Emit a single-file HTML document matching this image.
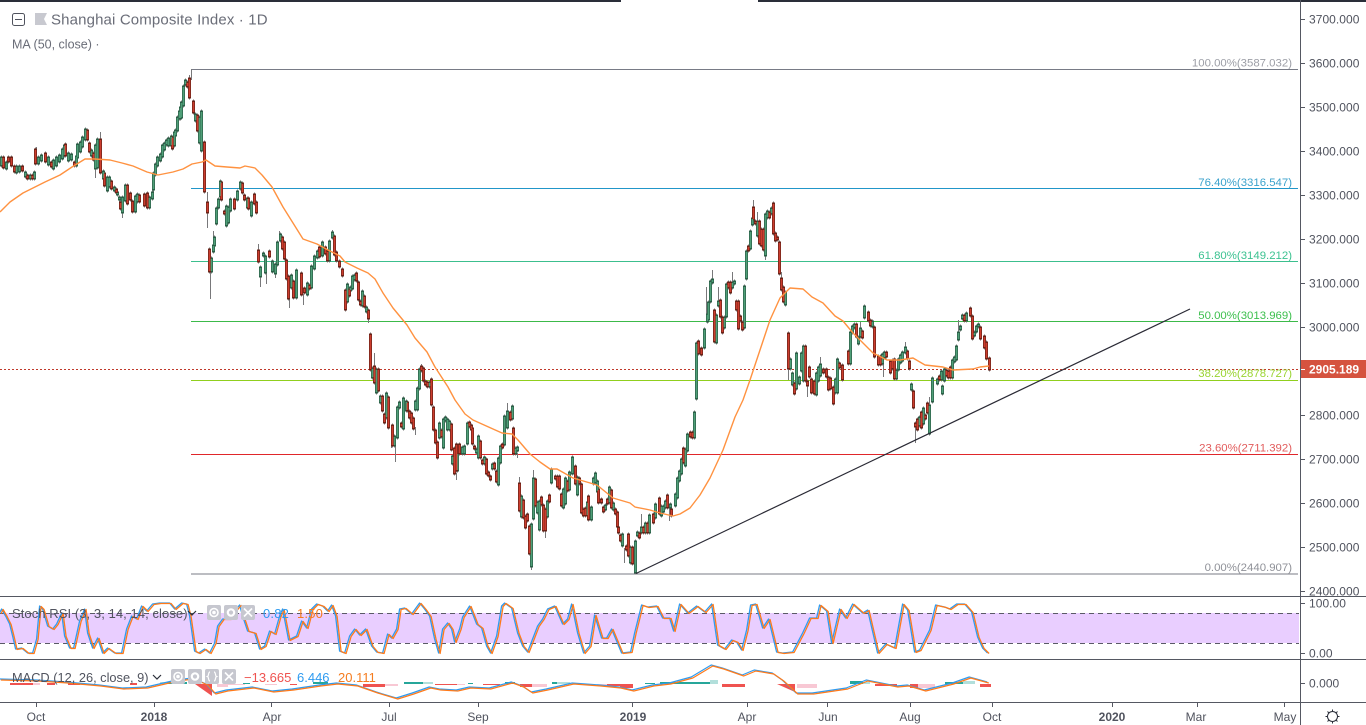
<!DOCTYPE html>
<html><head><meta charset="utf-8"><title>Shanghai Composite Index</title>
<style>
html,body{margin:0;padding:0;background:#fff;width:1366px;height:725px;overflow:hidden}
svg{position:absolute;left:0;top:0;display:block}
text{font-family:"Liberation Sans",sans-serif;font-size:12px;fill:#50535e}
.f{font-size:11.4px;text-anchor:end}
.a{font-size:12px;letter-spacing:.05px}
.t{text-anchor:middle;font-size:12px}
</style></head><body>
<svg width="1366" height="725" viewBox="0 0 1366 725" xmlns="http://www.w3.org/2000/svg">
<defs>
<path id="g" d="M1 158V165M6 163V168M16 167V172M19 167V171M25 173V176M30 176V178M34 173V178M38 158V163M41 156V160M48 158V164M53 161V168M56 158V165M59 156V161M62 150V158M64 146V155M68 154V160M71 155V159M76 157V165M77 145V157M80 143V151M82 138V146M85 130V139M91 151V155M95 146V168M97 140V167M103 172V178M107 178V190M109 178V186M114 188V190M117 193V194M119 198V199M122 198V212M125 186V200M135 197V211M137 195V201M149 198V207M152 193V198M153 174V189M155 165V174M157 158V165M160 155V160M162 146V156M164 144V149M166 141V144M168 139V145M171 137V145M174 133V145M175 131V135M177 118V130M179 112V118M180 108V118M181 103V117M183 87V105M185 81V84M195 115V120M199 118V142M201 112V150M211 259V271M213 246V251M214 238V245M216 209V223M218 200V207M220 182V196M226 207V225M228 208V222M230 200V210M237 192V199M240 183V188M247 199V207M251 203V215M260 268V276M263 254V255M265 257V272M272 262V271M275 265V273M277 243V264M280 235V240M291 276V287M296 271V297M307 284V294M311 267V287M314 257V268M317 252V257M322 243V255M329 242V260M332 233V237M347 285V301M350 288V290M352 277V288M354 276V279M362 292V305M366 308V311M372 369V377M376 370V392M380 397V402M386 394V417M394 437V445M397 408V437M399 403V407M403 399V428M406 402V410M415 402V409M417 389V409M419 370V388M429 383V386M439 424V437M443 420V447M445 418V420M447 420V429M449 422V429M452 457V463M457 454V470M462 448V453M464 447V453M467 424V443M476 450V452M478 437V457M484 458V463M492 465V468M498 459V484M500 447V462M504 417V444M507 412V427M512 407V418M515 449V453M517 448V450M521 497V516M531 525V566M533 479V518M537 503V512M539 502V529M547 502V516M551 470V482M563 490V507M565 479V503M569 473V489M572 458V473M577 478V494M587 503V515M591 508V519M593 479V483M595 474V482M597 482V491M605 506V509M609 488V502M613 504V509M622 535V545M630 548V562M635 542V572M637 533V535M641 528V532M645 524V532M649 516V532M655 505V517M661 507V515M663 507V511M665 502V507M670 505V507M675 495V505M677 479V497M679 472V480M681 460V473M685 450V465M687 435V450M694 413V437M696 344V398M704 330V347M707 315V321M708 303V319M710 282V301M712 280V282M716 316V342M718 302V305M724 318V327M726 285V316M732 283V287M734 282V283M744 287V327M746 252V278M750 232V248M752 219V224M757 222V235M765 215V255M767 212V217M771 209V213M785 293V304M790 360V368M792 374V384M796 354V388M799 378V383M801 354V370M803 347V380M816 374V394M818 368V380M820 365V375M835 380V392M837 360V392M850 333V363M852 327V332M854 325V327M858 338V343M860 329V336M864 307V317M872 322V326M882 355V363M884 353V357M896 371V378M898 360V369M900 356V362M902 353V360M905 348V352M911 385V389M919 418V425M923 409V423M929 406V433M932 379V401M937 380V383M941 372V379M942 387V393M944 370V380M952 361V377M954 358V361M956 347V359M958 333V339M960 327V329M962 316V318M966 314V320M974 333V335M976 327V331M978 325V326"/>
<path id="r" d="M3 158V167M8 158V161M11 158V165M14 167V171M22 167V170M27 176V178M32 176V178M35 150V163M45 154V161M51 163V166M65 145V155M74 163V165M87 131V139M89 144V151M93 154V159M100 140V172M104 174V185M111 182V188M116 190V192M120 203V208M127 186V203M130 194V199M132 202V211M139 196V201M144 195V205M147 194V207M172 138V148M187 83V86M189 79V97M193 102V112M197 116V130M204 143V191M207 203V212M209 250V271M221 183V199M224 212V213M234 200V208M242 184V192M244 196V199M248 199V208M254 195V203M256 203V212M258 251V261M269 252V256M282 238V248M284 243V258M286 261V278M288 277V298M293 282V297M301 274V294M304 289V292M309 286V288M319 248V256M325 248V253M327 252V260M334 237V254M336 253V260M339 262V266M342 270V275M345 291V309M349 290V295M356 274V280M358 283V299M360 302V304M364 297V306M368 311V318M370 335V369M374 367V382M378 370V390M382 397V410M384 415V422M388 398V427M392 426V445M401 424V426M407 403V410M409 412V417M411 414V422M413 419V428M421 367V370M423 369V380M425 382V384M427 383V386M431 380V404M433 408V429M435 431V442M437 443V457M441 431V436M451 425V449M454 449V473M456 445V470M459 445V453M469 423V426M471 426V429M472 429V443M474 447V448M480 442V457M482 461V463M486 460V473M488 473V475M490 477V479M494 464V468M496 472V481M502 445V447M510 413V419M513 429V453M519 484V510M523 501V517M525 517V527M527 515V520M529 527V553M535 480V505M541 498V504M543 506V530M545 510V530M549 496V501M555 477V478M557 477V486M559 477V488M561 495V505M567 482V490M575 467V483M579 479V483M581 485V512M583 510V515M585 509V515M588 497V519M598 490V502M601 500V502M603 508V511M607 500V503M611 491V507M615 510V513M617 513V526M618 528V532M620 536V540M626 547V549M628 535V555M632 548V563M639 534V537M643 528V532M647 524V532M653 515V522M659 499V513M667 496V507M671 510V515M683 449V462M690 433V436M692 433V437M698 342V353M701 349V354M714 311V341M720 301V316M722 318V332M728 283V287M730 283V292M736 302V309M738 302V328M740 317V320M742 323V329M748 247V250M753 208V219M755 222V223M759 222V243M761 230V245M763 230V249M769 213V217M773 204V233M775 234V240M777 238V239M779 243V273M781 279V289M783 288V301M788 334V368M794 384V393M805 347V380M807 382V385M809 368V376M811 380V392M814 382V393M823 370V372M826 370V376M828 378V389M830 379V388M833 388V403M839 364V367M842 366V379M848 352V363M856 325V336M862 332V337M868 313V320M870 321V325M874 328V356M878 357V364M880 357V364M886 353V356M890 362V372M892 361V368M894 360V378M907 352V358M909 362V368M913 392V407M915 424V426M917 420V429M921 413V427M925 416V418M927 404V412M939 377V379M946 371V375M948 372V377M950 368V377M964 316V320M970 309V315M972 317V338M980 328V338M984 337V347M986 343V358M989 359V369"/>
<path id="st" d="M0 613L2 609L6 616L10 624L13 636L16 649L22 648L28 653L33 653L37 639L40 606L43 609L48 626L53 629L57 624L62 613L65 636L70 648L74 648L80 621L85 609L88 633L93 648L98 638L103 653L108 648L115 653L122 653L127 629L132 616L137 619L142 606L147 611L153 604L160 603L170 603L175 609L182 603L187 604L190 616L195 651L199 653L205 649L210 653L215 643L218 626L223 619L230 619L235 611L240 605L243 616L248 631L255 633L260 649L265 646L270 631L275 634L280 616L283 609L289 640L297 636L302 621L307 628L312 609L317 604L323 606L328 611L332 605L336 616L340 651L345 653L350 636L355 629L360 635L366 629L372 646L377 652L383 653L388 634L392 638L397 629L400 609L405 608L412 614L420 603L425 609L430 616L435 639L439 653L443 629L448 623L452 629L455 642L460 629L463 617L470 606L477 624L482 628L487 646L491 653L497 636L502 606L505 603L512 608L518 633L523 646L528 652L533 639L538 626L543 619L548 609L555 606L563 624L568 619L572 604L578 633L584 653L590 646L595 615L602 638L607 638L612 629L617 641L622 653L631 652L635 633L642 605L648 607L657 606L663 618L670 618L674 631L680 604L688 613L697 606L705 612L712 604L718 645L725 649L732 640L737 642L742 650L747 630L751 605L756 604L763 628L769 619L777 652L783 653L793 652L803 633L810 618L817 618L820 605L827 611L832 643L840 609L846 618L853 604L863 613L868 610L878 653L886 644L895 648L903 604L908 610L915 652L920 650L930 630L936 605L945 607L950 609L957 604L965 604L972 612L978 637L983 648L988 653"/>
<path id="mc" d="M0 679L37 680L67 682L100 685L123 688L147 687L160 684L177 680L193 678L207 684L215 693L227 690L253 687L273 691L293 689L320 685L337 683L357 685L377 692L397 698L413 693L430 687L440 689L457 690L470 687L490 688L512 682L523 686L532 692L547 689L573 683L600 685L620 687L633 690L653 685L670 683L692 677L712 665L723 668L743 675L755 670L773 673L783 680L797 693L813 693L847 688L867 680L897 686L908 685L925 690L953 683L970 677L988 682"/>
</defs>
<rect x="0" y="0" width="621" height="2" fill="#2a2e39"/><rect x="758" y="0" width="608" height="2" fill="#2a2e39"/>
<!-- stoch band -->
<rect x="0" y="613" width="1299" height="30" fill="#e9ceff"/>
<path d="M0 613.5H1299M0 643.5H1299" stroke="#5a5a66" stroke-dasharray="5 4" fill="none"/>
<!-- fib -->
<g fill="none" stroke-width="1">
<path d="M191 69.5H1298M191 574H1298" stroke="#787b86"/>
<path d="M191 188.5H1298" stroke="#2196c9"/>
<path d="M191 261.5H1298" stroke="#3cbf8e"/>
<path d="M191 321.5H1298" stroke="#3cba4a"/>
<path d="M191 380.5H1298" stroke="#90cf1e"/>
<path d="M191 454.5H1298" stroke="#e0262a"/>
</g>
<path d="M0 369.5H1300" stroke="#c0392b" stroke-dasharray="2 2" fill="none"/>
<!-- candles -->
<g transform="translate(.5 0)" fill="none">
<g stroke="#78787a" stroke-width="1">
<use href="#g" y="-2.5"/><use href="#g" y="2.5"/><use href="#r" y="-2.5"/><use href="#r" y="2.5"/>
<path d="M191 69V80M189 75V81M207 192V228M210 250V299M213 231V238M100 132V140M95 168V178M36 147V151M122 212V218M258 244V251M260 276V287M266 272V284M279 231V235M289 298V308M303 294V305M332 230V233M275 273V278M368 318V323M374 353V367M395 445V462M391 433V448M415 427V435M421 364V367M456 473V480M507 403V412M517 453V458M519 477V484M531 566V570M533 470V479M545 530V538M624 548V563M641 514V528M669 507V521M679 470V472M712 270V280M706 287V315M718 287V302M732 272V282M753 200V208M757 212V222M765 255V260M781 272V279M788 368V380M807 385V397M820 357V365M860 322V329M883 363V377M905 342V348M915 426V443M929 397V406M958 320V333"/>
</g>
<use href="#g" stroke="#2b5f47" stroke-width="3" stroke-linecap="square"/>
<use href="#r" stroke="#6a2318" stroke-width="3" stroke-linecap="square"/>
<use href="#g" stroke="#4f9f78" stroke-width="1.6"/>
<use href="#r" stroke="#cc3d2e" stroke-width="1.6"/>
</g>
<!-- MA -->
<path fill="none" stroke="#ff9240" stroke-width="1.4" stroke-linejoin="round" d="M0 212L10 202L23 193L45 182L60 175L72 167L85 159L95 159L110 160L122 163L133 166L147 172L158 175L173 172L183 169L192 164L202 162L206 160L215 166L227 167L240 168L245 166L255 168L262 175L272 187L283 207L293 223L303 239L317 244L328 250L340 256L345 262L357 268L368 273L375 279L383 293L393 308L407 325L415 338L427 352L435 367L448 387L455 400L465 414L473 420L493 429L502 433L512 434L518 440L530 454L540 462L550 469L557 469L573 478L597 485L613 498L630 503L635 507L650 510L660 513L673 516L680 514L690 508L700 495L710 478L723 450L735 417L743 400L750 380L760 350L770 320L780 298L790 288L803 289L812 297L823 303L835 316L843 321L853 333L873 353L887 360L900 360L913 358L925 365L943 367L953 370L973 369L980 367L989 366"/>
<!-- trend -->
<path d="M636 573.5L1190 309" stroke="#2a2a35" stroke-width="1.2" fill="none"/>
<!-- fib labels -->
<text class="f" x="1292" y="66.5" style="fill:#9c9ea6">100.00%(3587.032)</text>
<text class="f" x="1292" y="186" style="fill:#3ba2cc">76.40%(3316.547)</text>
<text class="f" x="1292" y="259" style="fill:#3cc291">61.80%(3149.212)</text>
<text class="f" x="1292" y="319" style="fill:#3cbf4d">50.00%(3013.969)</text>
<text class="f" x="1292" y="377" style="fill:#9ad432">38.20%(2878.727)</text>
<text class="f" x="1292" y="451.5" style="fill:#e25c5c">23.60%(2711.392)</text>
<text class="f" x="1292" y="571" style="fill:#8f9198">0.00%(2440.907)</text>
<!-- stoch lines -->
<g fill="none" stroke-width="1.3" stroke-linejoin="round">
<use href="#st" stroke="#2e9bf0" x="-.4"/>
<use href="#st" stroke="#ff7a1a" x="1.1" y=".5"/>
</g>
<!-- macd hist -->
<g>
<path d="M10 683h23v2h-23zM47 683h8v2h-8zM68 683h12v2h-12zM130 683h7v2h-7zM195 684h17v12zM290 684h7v1h-7zM363 684h22v3h-22zM435 684h22v1h-22zM483 684h17v1h-17zM520 684h12v3h-12zM607 684h26v2h-26zM620 684h13v4h-13zM722 684h23v3h-23zM777 684h18v8zM875 684h22v2h-22zM910 684h8v4h-8zM980 684h11v3h-11z" fill="#ef5350"/>
<path d="M33 683h7v2h-7zM80 684h10v1h-10zM217 684h11v3h-11zM228 684h17v1h-17zM265 684h12v1h-12zM385 684h13v2h-13zM457 684h8v1h-8zM532 684h15v3h-15zM597 684h10v2h-10zM797 684h20v4h-20zM918 684h17v4h-17z" fill="#f8c8d4"/>
<path d="M167 682h20v2h-20zM243 683h7v1h-7zM313 682h15v2h-15zM404 682h19v2h-19zM468 683h5v1h-5zM505 682h10v2h-10zM552 682h5v2h-5zM645 683h10v1h-10zM660 682h50v2h-50zM850 681h13v3h-13zM945 682h18v2h-18z" fill="#26a69a"/>
<path d="M160 682h7v2h-7zM423 682h10v2h-10zM557 682h13v2h-13zM710 680h8v4h-8zM863 682h7v2h-7zM963 681h12v3h-12z" fill="#b2dfdb"/>
<use href="#mc" fill="none" stroke="#2e9bf0" stroke-width="1.2" stroke-linejoin="round" x="-.8"/>
<use href="#mc" fill="none" stroke="#ff7a1a" stroke-width="1.2" stroke-linejoin="round" x=".8" y="1"/>
</g>
<!-- separators -->
<path d="M0 596.5H1366M0 659.5H1366M0 702.5H1366M1300.5 0V725" stroke="#555862" fill="none"/>
<!-- axis ticks -->
<path d="M1301 19.5h4M1301 63.5h4M1301 107.5h4M1301 151.5h4M1301 195.5h4M1301 239.5h4M1301 283.5h4M1301 327.5h4M1301 415.5h4M1301 459.5h4M1301 503.5h4M1301 547.5h4M1301 591.5h4M1301 603.5h4M1301 653.5h4M1301 683.5h4M36.500 703v4M154.500 703v4M271.500 703v4M389.500 703v4M478.500 703v4M632.500 703v4M747.500 703v4M827.500 703v4M910.500 703v4M992.500 703v4M1112.500 703v4M1197.500 703v4M1284.500 703v4" stroke="#555862" fill="none"/>
<g class="a">
<text class="a" x="1309" y="23.5">3700.000</text><text class="a" x="1309" y="67.5">3600.000</text><text class="a" x="1309" y="111.5">3500.000</text><text class="a" x="1309" y="155.5">3400.000</text><text class="a" x="1309" y="199.5">3300.000</text><text class="a" x="1309" y="243.5">3200.000</text><text class="a" x="1309" y="287.5">3100.000</text><text class="a" x="1309" y="331.5">3000.000</text><text class="a" x="1309" y="419.5">2800.000</text><text class="a" x="1309" y="463.5">2700.000</text><text class="a" x="1309" y="507.5">2600.000</text><text class="a" x="1309" y="551.5">2500.000</text><text class="a" x="1309" y="595.5">2400.000</text>
<text class="a" x="1309" y="607.5">100.00</text><text class="a" x="1309" y="657.5">0.00</text><text class="a" x="1309" y="687.5">0.000</text>
</g>
<rect x="1301" y="360" width="65" height="18" fill="#d5533f"/>
<path d="M1301 369.5h4" stroke="#fff"/>
<text x="1309" y="373.5" style="fill:#fff;font-weight:bold;font-size:12px">2905.189</text>
<!-- time labels -->
<text class="t" x="36" y="721">Oct</text><text class="t" x="154" y="721" style="font-weight:bold">2018</text><text class="t" x="272" y="721">Apr</text><text class="t" x="389" y="721">Jul</text><text class="t" x="478" y="721">Sep</text><text class="t" x="633" y="721" style="font-weight:bold">2019</text><text class="t" x="747" y="721">Apr</text><text class="t" x="828" y="721">Jun</text><text class="t" x="910" y="721">Aug</text><text class="t" x="992" y="721">Oct</text><text class="t" x="1112" y="721" style="font-weight:bold">2020</text><text class="t" x="1196" y="721">Mar</text><text class="t" x="1285" y="721">May</text>
<!-- gear -->
<g stroke="#2a2e39" fill="none"><circle cx="1332.5" cy="716.5" r="5"/><path d="M1332.5 709.5v2M1332.5 721.5v2M1325.5 716.5h2M1337.5 716.5h2M1327.5 711.5l1.500 1.500M1336 720l1.500 1.500M1337.5 711.5l-1.500 1.500M1329 720l-1.500 1.500"/></g>
<!-- title -->
<rect x="12.5" y="13.5" width="12" height="12" rx="2" fill="#fff" stroke="#50535e"/><path d="M15 19.5h7" stroke="#50535e"/>
<path d="M35 13h12l-3 6 3 6H35z" fill="#c8c9d0"/>
<text x="51" y="24.5" style="font-size:15px;letter-spacing:.14px;fill:#6a6d78">Shanghai Composite Index · 1D</text>
<text x="12" y="48.5" style="font-size:12.5px;fill:#6a6d78">MA (50, close) ·</text>
<!-- stoch legend -->
<text x="12" y="618" style="font-size:13px;letter-spacing:.07px;fill:#50535e">Stoch RSI (3, 3, 14, 14, close)</text>
<path d="M188 611l4 4 4-4" stroke="#2a2e39" stroke-width="1.2" fill="none"/>
<g fill="#c6c7cf">
<rect x="207" y="605" width="14" height="15" rx="2"/><rect x="224" y="605" width="14" height="15" rx="2"/><rect x="241" y="605" width="14" height="15" rx="2"/>
<rect x="171" y="669" width="14" height="15" rx="2"/><rect x="188" y="669" width="14" height="15" rx="2"/><rect x="205" y="669" width="14" height="15" rx="2"/><rect x="222" y="669" width="14" height="15" rx="2"/>
</g>
<g fill="none" stroke="#fff" stroke-width="1.6">
<circle cx="214" cy="612.5" r="4"/><circle cx="214" cy="612.5" r="1" fill="#fff"/>
<circle cx="231" cy="612.5" r="3.2" stroke-width="2.2"/>
<path d="M244 608.5l8 8M252 608.5l-8 8"/>
<circle cx="178" cy="676.5" r="4"/><circle cx="178" cy="676.5" r="1" fill="#fff"/>
<circle cx="195" cy="676.5" r="3.2" stroke-width="2.2"/>
<path d="M210 672c-2 0-1 4-2.500 4.500c1.500.5.500 4.500 2.500 4.500M214 672c2 0 1 4 2.500 4.500c-1.500.5-.5 4.500-2.500 4.500" stroke-width="1.2"/>
<path d="M225 672.500l8 8M233 672.500l-8 8"/>
</g>
<text x="263" y="618" style="font-size:13px;letter-spacing:.2px;fill:#2e9bf0">0.82</text>
<text x="297" y="618" style="font-size:13px;letter-spacing:.2px;fill:#f57c1f">1.50</text>
<!-- macd legend -->
<text x="12" y="682" style="font-size:12.8px;fill:#50535e">MACD (12, 26, close, 9)</text>
<path d="M153 675l4 4 4-4" stroke="#2a2e39" stroke-width="1.2" fill="none"/>
<text x="244" y="682" style="font-size:13px;fill:#ef5350">−13.665</text>
<text x="297" y="682" style="font-size:13px;fill:#2e9bf0">6.446</text>
<text x="338" y="682" style="font-size:13px;fill:#f57c1f">20.111</text>
</svg>
</body></html>
